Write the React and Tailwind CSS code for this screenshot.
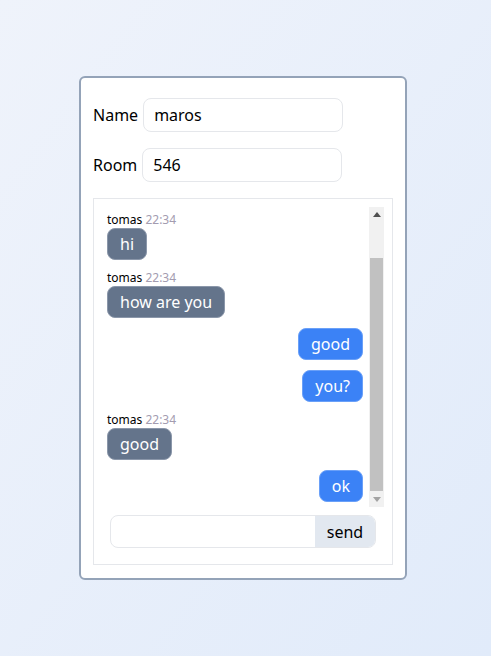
import React from 'react';

const MESSAGES = [
  { from: 'tomas', time: '22:34', text: 'hi', mine: false },
  { from: 'tomas', time: '22:34', text: 'how are you', mine: false },
  { from: 'maros', time: '22:34', text: 'good', mine: true },
  { from: 'maros', time: '22:34', text: 'you?', mine: true },
  { from: 'tomas', time: '22:34', text: 'good', mine: false },
  { from: 'maros', time: '22:34', text: 'ok', mine: true },
];

const Message = ({ msg }) => {
  if (msg.mine) {
    return (
      <div className="flex justify-end">
        <div className="px-3 py-[3px] rounded-lg border border-[#6aa0f8] bg-[#3b82f6] text-white text-base leading-6">
          {msg.text}
        </div>
      </div>
    );
  }

  return (
    <div className="flex flex-col items-start">
      <div className="text-xs leading-4">
        <span className="text-black">{msg.from}</span>{' '}
        <span className="text-[#a39cb0]">{msg.time}</span>
      </div>
      <div className="px-3 py-[3px] rounded-lg border border-[#8b97aa] bg-[#64748b] text-white text-base leading-6">
        {msg.text}
      </div>
    </div>
  );
};

// classic scrollbar look, list is shown scrolled to the bottom
const Scrollbar = () => (
  <div className="w-[15px] shrink-0 bg-[#f1f1f1] flex flex-col">
    <div className="h-[15px] flex items-center justify-center">
      <svg width="8" height="5" viewBox="0 0 8 5">
        <path d="M0 5 L4 0 L8 5 Z" fill="#505050" />
      </svg>
    </div>
    <div className="h-[36px]" />
    <div className="flex-1 mx-[1px] mb-[1px] bg-[#c1c1c1]" />
    <div className="h-[15px] flex items-center justify-center">
      <svg width="8" height="5" viewBox="0 0 8 5">
        <path d="M0 0 L8 0 L4 5 Z" fill="#a3a3a3" />
      </svg>
    </div>
  </div>
);

const App = () => {
  const inputClass =
    'w-[200px] h-[34px] px-[10px] rounded-lg border border-[#e5e7eb] bg-white text-base text-black outline-none';

  return (
    <div
      className="min-h-screen bg-linear-to-br from-[#eff3fb] to-[#e1ebfa] pt-[76px] pl-[79px]"
      style={{ fontFamily: '"Segoe UI", "Noto Sans", sans-serif' }}
    >
      <div className="w-[328px] bg-white border-2 border-[#94a3b8] rounded-md px-3 pt-5 pb-[13px] text-black">
        <div className="flex flex-col gap-4">
          <div className="flex items-center gap-[5px]">
            <label className="shrink-0 text-base">Name</label>
            <input className={inputClass} defaultValue="maros" />
          </div>
          <div className="flex items-center gap-[5px]">
            <label className="shrink-0 text-base">Room</label>
            <input className={inputClass} defaultValue="546" />
          </div>

          <div className="border border-[#e5e7eb] p-2">
            <div className="flex h-[300px]">
              <div className="flex-1 min-w-0 overflow-hidden pl-[5px] pr-[6px] pt-1 pb-[5px] flex flex-col justify-end gap-[10px]">
                {MESSAGES.map((m, i) => (
                  <Message key={i} msg={m} />
                ))}
              </div>
              <Scrollbar />
            </div>
            <div className="flex mx-2 my-2 h-[33px] rounded-lg border border-[#e5e7eb] overflow-hidden">
              <input className="flex-1 min-w-0 px-2 outline-none text-base" />
              <button type="button" className="w-[60px] bg-[#e2e8f0] text-base text-black">
                send
              </button>
            </div>
          </div>
        </div>
      </div>
    </div>
  );
};

export default App;
